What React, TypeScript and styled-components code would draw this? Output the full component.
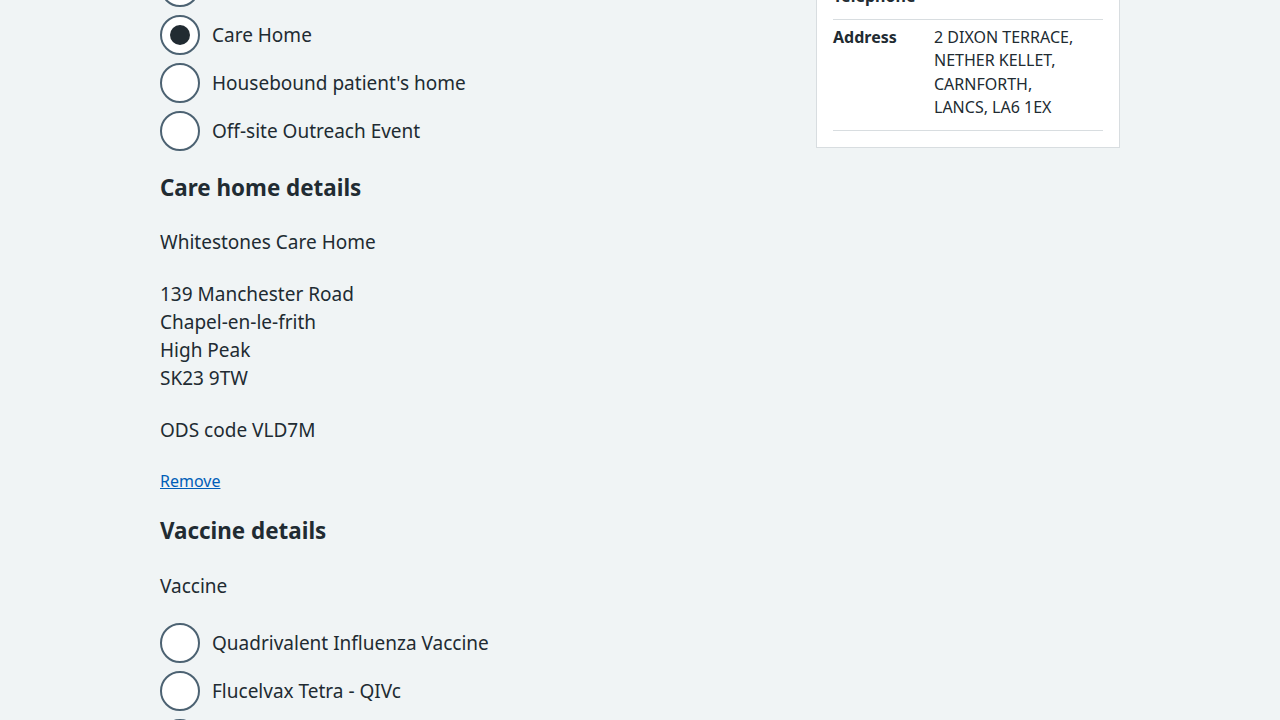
import React from "react";
import styled, { createGlobalStyle } from "styled-components";

const Global = createGlobalStyle`
  html, body { margin: 0; padding: 0; background: #f0f4f5; }
  body {
    font-family: "Noto Sans", "Open Sans", Arial, sans-serif;
    color: #212b32;
    overflow: hidden;
  }
  * { box-sizing: border-box; }
`;

const Page = styled.div`
  width: 960px;
  margin: -38px auto 0;
  display: flex;
  align-items: flex-start;
  gap: 16px;
`;

const Main = styled.div`
  width: 640px;
  padding-top: 5px;
  display: flex;
  flex-direction: column;
`;

const RadioGroup = styled.div<{ $mt?: number }>`
  display: flex;
  flex-direction: column;
  gap: 8px;
  margin-top: ${(p) => p.$mt ?? 0}px;
`;

const RadioRow = styled.label`
  display: flex;
  align-items: center;
  gap: 12px;
  font-size: 19px;
  line-height: 28px;
  height: 40px;
`;

const RadioCircle = styled.span<{ $checked?: boolean }>`
  width: 40px;
  height: 40px;
  border-radius: 50%;
  border: 2px solid #4c6272;
  background: #fff;
  display: flex;
  align-items: center;
  justify-content: center;
  flex-shrink: 0;
  &::after {
    content: "";
    display: ${(p) => (p.$checked ? "block" : "none")};
    width: 20px;
    height: 20px;
    border-radius: 50%;
    background: #212b32;
  }
`;

const Heading = styled.h2<{ $mt: number }>`
  margin: ${(p) => p.$mt}px 0 0;
  font-size: 22.4px;
  line-height: 32px;
  font-weight: 700;
`;

const Para = styled.p<{ $mt: number }>`
  margin: ${(p) => p.$mt}px 0 0;
  font-size: 19px;
  line-height: 28px;
`;

const Link = styled.a<{ $mt: number }>`
  margin-top: ${(p) => p.$mt}px;
  font-size: 16px;
  line-height: 24px;
  color: #005eb8;
  text-decoration: underline;
  align-self: flex-start;
`;

const Card = styled.aside`
  width: 304px;
  background: #fff;
  border: 1px solid #d8dde0;
  padding: 16px;
`;

const SummaryList = styled.dl`
  margin: 0;
`;

const SummaryRow = styled.div`
  display: flex;
  border-bottom: 1px solid #d8dde0;
  padding: 6px 0 10px;
  font-size: 16px;
  line-height: 23.5px;
`;

const Key = styled.dt`
  width: 101px;
  font-weight: 700;
`;

const Value = styled.dd`
  margin: 0;
  flex: 1;
`;

const Radio = ({ label, checked }: { label: string; checked?: boolean }) => (
  <RadioRow>
    <RadioCircle $checked={checked} />
    {label}
  </RadioRow>
);

export default function App() {
  return (
    <>
      <Global />
      <Page>
        <Main>
          <RadioGroup>
            <Radio label="GP surgery" />
            <Radio label="Care Home" checked />
            <Radio label="Housebound patient's home" />
            <Radio label="Off-site Outreach Event" />
          </RadioGroup>
          <Heading $mt={21}>Care home details</Heading>
          <Para $mt={24}>Whitestones Care Home</Para>
          <Para $mt={24}>
            139 Manchester Road
            <br />
            Chapel-en-le-frith
            <br />
            High Peak
            <br />
            SK23 9TW
          </Para>
          <Para $mt={24}>ODS code VLD7M</Para>
          <Link $mt={25} href="#">
            Remove
          </Link>
          <Heading $mt={22}>Vaccine details</Heading>
          <Para $mt={25}>Vaccine</Para>
          <RadioGroup $mt={23}>
            <Radio label="Quadrivalent Influenza Vaccine" />
            <Radio label="Flucelvax Tetra - QIVc" />
            <Radio label="Fluenz Tetra - LAIV" />
          </RadioGroup>
        </Main>
        <Card>
          <SummaryList>
            <SummaryRow>
              <Key>Telephone</Key>
              <Value />
            </SummaryRow>
            <SummaryRow>
              <Key>Address</Key>
              <Value>
                2 DIXON TERRACE,
                <br />
                NETHER KELLET,
                <br />
                CARNFORTH,
                <br />
                LANCS, LA6 1EX
              </Value>
            </SummaryRow>
          </SummaryList>
        </Card>
      </Page>
    </>
  );
}
